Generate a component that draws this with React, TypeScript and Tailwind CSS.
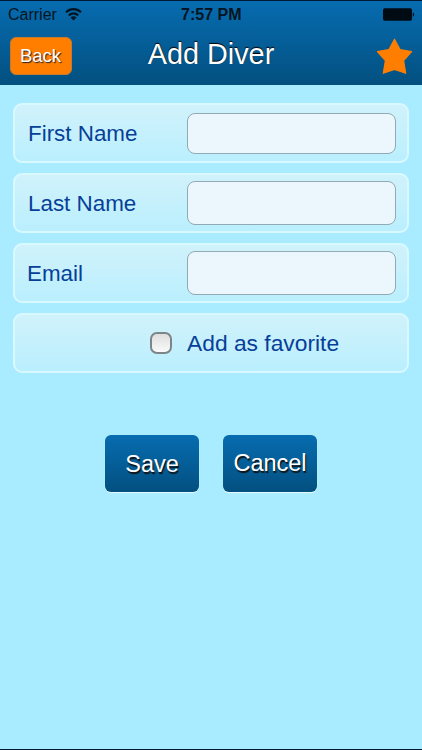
import { useState } from "react";
import type { ReactNode } from "react";

function WifiIcon() {
  return (
    <svg width="17" height="13" viewBox="0 0 17 13" fill="none" stroke="#031522" strokeWidth="2.2">
      <path d="M1 4.3a10.6 10.6 0 0 1 15 0" />
      <path d="M3.8 7.4a6.6 6.6 0 0 1 9.4 0" />
      <path d="M8.5 12.6 5.5 9.5a4.2 4.2 0 0 1 6 0z" fill="#031522" stroke="none" />
    </svg>
  );
}

function BatteryIcon() {
  return (
    <svg width="32" height="13" viewBox="0 0 32 13" fill="#000b14">
      <rect x="0" y="0.3" width="29" height="12.4" rx="1.8" />
      <path d="M29.8 4.5c1.8.4 1.8 3.6 0 4z" />
    </svg>
  );
}

function StatusBar() {
  return (
    <div className="grid h-[27px] grid-cols-[1fr_auto_1fr] items-center pl-[8px] pr-[7.5px] text-[16px] leading-none text-[#031522]">
      <div className="flex items-center gap-2">
        <span className="pt-px">Carrier</span>
        <WifiIcon />
      </div>
      <span className="pt-px font-bold">7:57 PM</span>
      <div className="flex justify-end">
        <BatteryIcon />
      </div>
    </div>
  );
}

function Header() {
  return (
    <header className="h-[85px] border-t border-[#001a38] bg-linear-to-b from-[#076cb0] to-[#035080]">
      <StatusBar />
      <div className="grid h-[56px] grid-cols-[1fr_auto_1fr] items-center pl-[10px] pr-[9px]">
        <button
          type="button"
          className="h-[38px] w-[62px] rounded-[6px] border border-[#c77a2c] bg-[#ff7e00] pr-px text-[18.5px] leading-none text-white [text-shadow:1px_1px_1px_#222]"
        >
          Back
        </button>
        <h1 className="-mt-[3px] pr-px text-[28.8px] leading-none text-white [text-shadow:0_-1px_1px_#000]">
          Add Diver
        </h1>
        <button type="button" aria-label="Favorite" className="justify-self-end">
          <svg width="37" height="38" viewBox="0 0 37 38" fill="#ff7e00" stroke="#ff7e00" strokeWidth="1.2" strokeLinejoin="round">
            <path d="M18.5 2.2 24 12.6 35.6 14.5 27.6 23.6 29.7 36.3 18.5 32.4 7.3 36.3 9.4 23.6 1.4 14.5 13 12.6z" />
          </svg>
        </button>
      </div>
    </header>
  );
}

function Row({ children }: { children: ReactNode }) {
  return (
    <div className="flex h-[60px] rounded-[9px] border-2 border-[#d8f9ff] bg-linear-to-b from-[#d0f2fb] to-[#baeffe] text-[22.4px] leading-none text-[#073f98]">
      {children}
    </div>
  );
}

const FIELDS = [
  { id: "first", label: "First Name", pad: "pl-[13px]", input: "mt-2 h-[41px]" },
  { id: "last", label: "Last Name", pad: "pl-[13px]", input: "mt-[6px] h-[44px]" },
  { id: "email", label: "Email", pad: "pl-[12px]", input: "mt-[6px] h-[44px]" },
];

const actionClass =
  "h-[57px] w-[94px] rounded-[6px] bg-linear-to-b from-[#076cb0] to-[#035080] text-[23.5px] leading-none text-white shadow-[0_1px_1px_#e8fcff] [text-shadow:1px_2px_1px_#111]";

export default function App() {
  const [favorite, setFavorite] = useState(false);

  return (
    <div className="flex h-[750px] w-[422px] flex-col overflow-hidden border-b border-[#001a30] bg-[#a9ebff] font-['Liberation_Sans',Arial,sans-serif]">
      <Header />
      <form className="flex flex-col pl-[13px] pr-[13px] pt-[18px]" onSubmit={(e) => e.preventDefault()}>
        <div className="flex flex-col gap-[10px]">
          {FIELDS.map((f) => (
            <Row key={f.id}>
              <label htmlFor={f.id} className={`flex w-[172px] items-center pt-[2px] ${f.pad}`}>
                {f.label}
              </label>
              <input
                id={f.id}
                className={`w-[209px] rounded-[8px] border border-[#91aab3] bg-[#ebf7fc] px-2 outline-none ${f.input}`}
              />
            </Row>
          ))}
          <Row>
            <label className="flex items-center gap-[15px] pl-[135px]">
              <input
                type="checkbox"
                checked={favorite}
                onChange={(e) => setFavorite(e.target.checked)}
                className="size-[22px] appearance-none rounded-[7px] border-2 border-[#7c8587] bg-linear-to-b from-[#dedede] to-[#fafafa] checked:from-[#076cb0] checked:to-[#035080]"
              />
              <span className="text-[22.8px]">Add as favorite</span>
            </label>
          </Row>
        </div>
        <div className="mt-[62px] flex justify-center gap-[24px]">
          <button type="submit" className={`pt-[2px] ${actionClass}`}>
            Save
          </button>
          <button type="button" className={actionClass}>
            Cancel
          </button>
        </div>
      </form>
    </div>
  );
}
